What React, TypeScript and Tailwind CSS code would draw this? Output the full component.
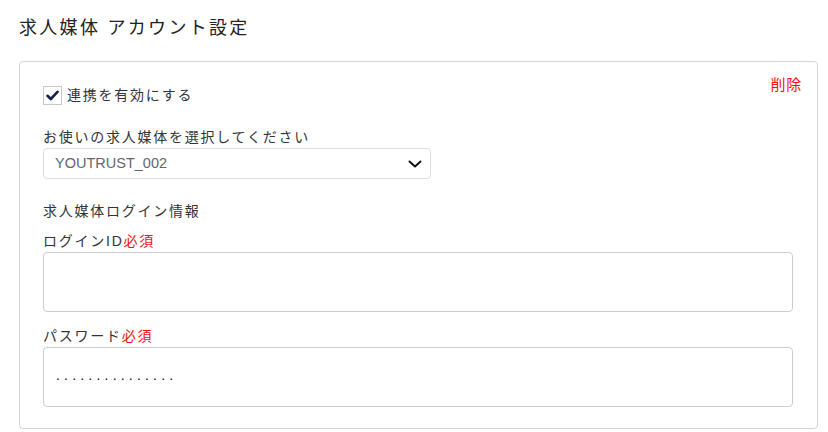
import React from "react";

const jp = { fontFamily: '"Liberation Sans", "Noto Sans CJK JP", sans-serif' };

export default function App() {
  return (
    <div className="w-[828px] h-[432px] bg-white overflow-hidden pl-[19px] pr-[10px] pt-[14px]" style={jp}>
      <h1 className="h-[28px] leading-[28px] text-[18px] tracking-[2.3px] text-[#222] font-normal">
        求人媒体 アカウント設定
      </h1>
      <div className="relative mt-[19px] w-[799px] border border-[#d4d4d4] rounded-[4px] px-[23px] pt-[23px] pb-[21px] text-[14px] tracking-[1.75px] text-[#333]">
        <button className="absolute right-[15px] top-[13px] h-[20px] leading-[20px] text-[15px] tracking-[0.05em] text-[#ee1111]">
          削除
        </button>
        <label className="flex items-center h-[20px]">
          <span className="w-[19px] h-[19px] border border-[#c8c8c8] bg-white flex items-center justify-center">
            <svg width="13" height="11" viewBox="0 0 13 11">
              <path d="M1.5 5.8 L4.8 9 L11.5 1.8" fill="none" stroke="#1d1f4d" strokeWidth="2.6" strokeLinecap="round" strokeLinejoin="round" />
            </svg>
          </span>
          <span className="ml-[5px] leading-[20px]">連携を有効にする</span>
        </label>

        <div className="mt-[22px] leading-[20px]">お使いの求人媒体を選択してください</div>
        <div className="mt-[1px] w-[388px] h-[31px] border border-[#dedede] rounded-[4px] flex items-center justify-between pl-[11px] pr-[8px]">
          <span className="text-[14.5px] tracking-normal text-[#666]">YOUTRUST_002</span>
          <svg width="14" height="8" viewBox="0 0 14 8">
            <path d="M1.5 1.5 L7 6.5 L12.5 1.5" fill="none" stroke="#111" strokeWidth="2" strokeLinecap="round" strokeLinejoin="round" />
          </svg>
        </div>

        <div className="mt-[22px] leading-[20px]">求人媒体ログイン情報</div>

        <div className="mt-[10px] leading-[20px]">
          ログインID<span className="text-[#ee1111]">必須</span>
        </div>
        <div className="mt-[1px] h-[60px] w-[750px] border border-[#cccccc] rounded-[4px]" />

        <div className="mt-[14px] leading-[20px]">
          パスワード<span className="text-[#ee1111]">必須</span>
        </div>
        <div className="mt-[1px] h-[60px] w-[750px] border border-[#cccccc] rounded-[4px] flex items-center pl-[12px] pb-[5px]">
          <span className="tracking-[4.2px] text-[#111] text-[14px] leading-none">...............</span>
        </div>
      </div>
    </div>
  );
}
